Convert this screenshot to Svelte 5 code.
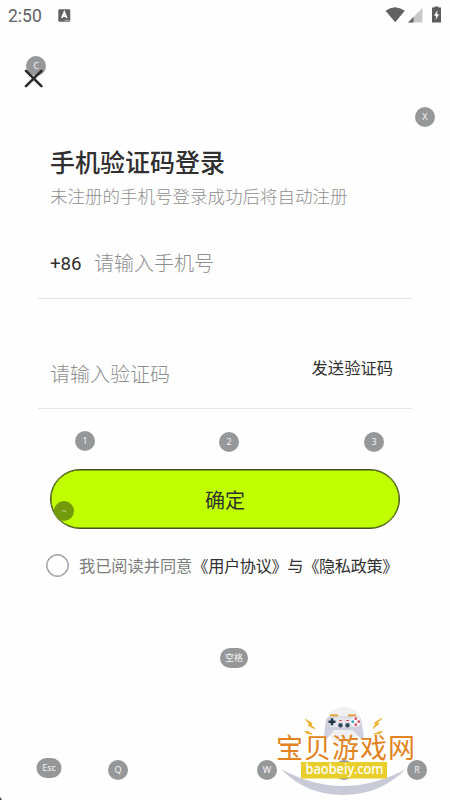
<script>
	let phone = '';
	let code = '';
	let agreed = false;

	// keyboard mapping hints floating over the page
	const keys = [
		{ label: 'C', x: 36, y: 66 },
		{ label: 'X', x: 425, y: 117 },
		{ label: '1', x: 85, y: 441 },
		{ label: '2', x: 229, y: 442 },
		{ label: '3', x: 374, y: 442 },
		{ label: '~', x: 64, y: 511, dark: true },
		{ label: '空格', x: 234, y: 658, w: 28 },
		{ label: 'Esc', x: 49, y: 768, w: 25 },
		{ label: 'Q', x: 118, y: 769.5 },
		{ label: 'W', x: 267, y: 769.5 },
		{ label: '', x: 344, y: 769.5 },
		{ label: 'R', x: 417, y: 769.5 }
	];
</script>

<div class="screen">
	<header class="status">
		<span class="time">2:50</span>
		<svg class="app-icon" width="13" height="13" viewBox="0 0 13 13">
			<rect x="0.3" y="0.3" width="12" height="12.4" rx="1.2" fill="#626262" />
			<path d="M3.8 9L6.3 3.2L8.8 9M4.8 7.2H7.8" fill="none" stroke="#fff" stroke-width="1.7" />
			<path d="M6.5 11.3H11.5" stroke="#b5b5b5" stroke-width="1" />
		</svg>
		<svg class="signals" width="58" height="18" viewBox="0 0 58 18">
			<path d="M0.5 4.7Q10 -2.4 19.8 4.7L10.2 16.2Z" fill="#626262" />
			<path d="M37.5 2V16.5H23Z" fill="#c8c8c8" />
			<path d="M28.5 11V16.5H23Z" fill="#626262" />
			<path d="M49.5 1.5V0.5H53.5V1.5H56V16.5H47V1.5Z" fill="#5c5c5c" />
			<path d="M52.6 4L49 9.8H51.2L50.6 14L54.1 8.2H52Z" fill="#fff" />
		</svg>
	</header>

	<div class="close-row">
		<button class="close" aria-label="关闭">
			<svg width="20" height="20" viewBox="0 0 20 20">
				<path
					d="M2 1.8L17.4 17.2M17.4 1.8L2 17.2"
					fill="none"
					stroke="#292929"
					stroke-width="2.6"
					stroke-linecap="round"
				/>
			</svg>
		</button>
	</div>

	<main>
		<h1>手机验证码登录</h1>
		<p class="sub">未注册的手机号登录成功后将自动注册</p>

		<div class="field phone">
			<span class="prefix">+86</span>
			<input type="tel" placeholder="请输入手机号" bind:value={phone} />
		</div>
		<div class="field code">
			<input type="text" placeholder="请输入验证码" bind:value={code} />
			<button class="send">发送验证码</button>
		</div>

		<button class="confirm">确定</button>

		<label class="agree">
			<input type="checkbox" bind:checked={agreed} />
			<span>我已阅读并同意<b>《用户协议》与《隐私政策》</b></span>
		</label>
	</main>

	{#each keys as key}
		<span
			class="key"
			class:dark={key.dark}
			style="left: {key.x}px; top: {key.y}px; width: {key.w ?? 20}px">{key.label}</span
		>
	{/each}

	<svg class="watermark" width="150" height="100" viewBox="270 700 150 100">
		<circle cx="344" cy="725" r="18" fill="#f0f0f2" />
		<path d="M281 769Q343 803 406 769Q380 795 343 795Q306 795 281 769Z" fill="#c9cad8" />
		<path d="M331 715.5h6M349 715.5h6" stroke="#e3a546" stroke-width="2.4" stroke-linecap="round" />
		<path
			d="M330 716.5H357Q361 717 361.7 722L363.5 734Q364.5 740 360.5 738.5L353 730H334L327 738.5Q323.5 740 324.3 734L325.6 722Q326 717 330 716.5Z"
			fill="#cfd0de"
		/>
		<path d="M331 717.5H356L359 722L356 727H331L328 722Z" fill="#e4e4ee" />
		<path d="M332 718.2v7M328.5 721.7h7" stroke="#253848" stroke-width="2.6" />
		<circle cx="340.5" cy="725.3" r="2.2" fill="#34495c" />
		<circle cx="347.5" cy="725.3" r="2.2" fill="#34495c" />
		<path d="M339 720.5h3M346 720.5h3" stroke="#df5c68" stroke-width="1" />
		<circle cx="355.8" cy="721.7" r="4.9" fill="#f6f6fa" />
		<circle cx="355.8" cy="718.7" r="1.4" fill="#dc5362" />
		<circle cx="355.8" cy="724.7" r="1.4" fill="#dc5362" />
		<circle cx="352.8" cy="721.7" r="1.4" fill="#3aa0b8" />
		<circle cx="358.8" cy="721.7" r="1.4" fill="#dc5362" />
		<path
			d="M305.5 719.5L312 723.3L311 725L315 728.8L308.3 725.6L309.3 723.8ZM305 731.3L309.3 732L309.5 733L312.2 734L307 733.6ZM381.8 718.5L377.5 722.5L378.8 723.8L373 728.3L376 723.8L374.5 722.8ZM382 731.5L377.5 732.3L377.5 733L374 734L380 733.6Z"
			fill="#edb22f"
			stroke="#edb22f"
			stroke-width="1"
		/>
		<text class="brand" x="276" y="758" textLength="139">宝贝游戏网</text>
		<rect x="301" y="762" width="86" height="16.5" fill="#e7ce2b" />
		<text class="domain" x="305.5" y="774" textLength="78" lengthAdjust="spacingAndGlyphs"
			>baobeiy.com</text
		>
	</svg>
	<svg class="corner" width="3" height="4" viewBox="0 0 3 4">
		<path d="M0 1V4H2Z" fill="#444" />
	</svg>
</div>

<style>
	:global(body) {
		background: #fefefe;
	}

	.screen {
		position: relative;
		width: 450px;
		height: 800px;
		overflow: hidden;
		background: #fefefe;
		font-family: 'Noto Sans', 'Noto Sans CJK SC', sans-serif;
		color: #303030;
	}

	button,
	input {
		font-family: inherit;
		color: inherit;
		border: none;
		background: none;
		padding: 0;
		margin: 0;
		outline: none;
	}

	.status {
		display: flex;
		align-items: center;
		height: 30px;
		padding: 0 8px;
		box-sizing: border-box;
	}

	.time {
		font-family: Roboto, sans-serif;
		font-size: 17.5px;
		color: #606060;
		width: 50px;
		padding-top: 2px;
	}

	.signals {
		margin-left: auto;
		margin-right: -1px;
	}

	.close-row {
		height: 38px;
		padding: 39px 0 0 24px;
	}

	.close {
		display: block;
		height: 20px;
		position: relative;
		z-index: 2;
	}

	.close svg {
		display: block;
	}

	main {
		padding: 37px 38px 0;
	}

	h1 {
		margin: 0;
		padding-left: 12px;
		height: 36px;
		line-height: 36px;
		font-size: 25px;
		font-weight: 500;
	}

	.sub {
		margin: 0;
		padding-left: 12px;
		height: 34px;
		line-height: 33px;
		font-size: 17.5px;
		font-weight: 300;
		color: #8e8e8e;
	}

	.field {
		display: flex;
		align-items: center;
		padding: 0 12px;
		border-bottom: 1px solid #e6e6e6;
		box-sizing: border-box;
	}

	.field input {
		flex: 1;
		min-width: 0;
		font-size: 20px;
		font-weight: 300;
		height: 36px;
	}

	.field input::placeholder {
		color: #8e8e8e;
		opacity: 1;
	}

	.phone {
		height: 85px;
		padding-top: 14px;
	}

	.prefix {
		width: 44px;
		font-family: Roboto, sans-serif;
		font-size: 18.7px;
		padding-top: 1px;
	}

	.code {
		height: 110px;
		padding: 41px 19px 0 12px;
	}

	.send {
		font-size: 16.3px;
		padding-bottom: 14px;
	}

	.confirm {
		display: block;
		width: 350px;
		height: 60px;
		margin: 60px 0 0 12px;
		border: 1px solid #45521f;
		box-shadow: inset 0 0 0 0.5px #45521f;
		border-radius: 30px;
		background: #bfff00;
		font-size: 20px;
	}

	.agree {
		display: flex;
		align-items: center;
		height: 24px;
		margin-top: 24px;
		padding-left: 8px;
		font-size: 16.2px;
		color: #7c7c7c;
		white-space: nowrap;
	}

	.agree input {
		appearance: none;
		box-sizing: border-box;
		width: 23px;
		height: 23px;
		border: 1px solid #92929c;
		box-shadow: inset 0 0 0 0.5px #92929c;
		border-radius: 50%;
		margin-right: 10px;
	}

	.agree b {
		font-weight: 400;
		letter-spacing: -0.35px;
		color: #303030;
	}

	.key {
		position: absolute;
		transform: translate(-50%, -50%);
		height: 20px;
		border-radius: 10px;
		background: #969798;
		color: #f4f4f4;
		font-size: 9px;
		line-height: 20px;
		text-align: center;
	}

	.key.dark {
		background: #739a0a;
		color: #c5d894;
	}

	.watermark {
		position: absolute;
		left: 270px;
		top: 700px;
	}

	.brand {
		font-size: 27px;
		font-weight: 400;
		fill: #e08320;
	}

	.domain {
		font-size: 14px;
		font-weight: 500;
		fill: #fff;
	}

	.corner {
		position: absolute;
		left: 0;
		bottom: 0;
	}
</style>
